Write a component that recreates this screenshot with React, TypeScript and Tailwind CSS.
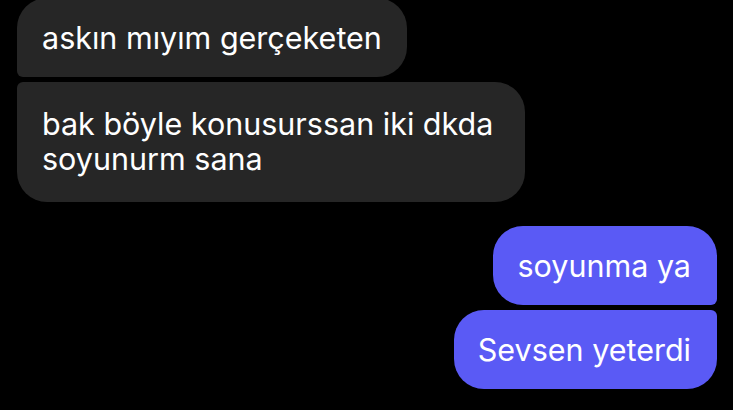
export default function App() {
    return (
        <div className="h-[410px] w-[733px] overflow-hidden bg-black text-white" style={{ fontFamily: 'Inter, "Noto Sans", sans-serif' }}>
            <div className="flex flex-col px-[17px] -mt-[2px]">
                <div className="self-start rounded-[30px] rounded-bl-[6px] bg-[#262626] px-[25px] py-[22px] text-[30.5px] leading-[35px]">
                    askın mıyım gerçeketen
                </div>
                <div className="mt-[5px] w-[508px] self-start rounded-[30px] rounded-tl-[6px] bg-[#262626] px-[25px] pt-[24px] pb-[26px] text-[30.5px] leading-[35px]">
                    bak böyle konusurssan iki dkda soyunurm sana
                </div>
                <div className="mt-[24px] mr-[-1px] self-end rounded-[30px] rounded-br-[6px] bg-[#5a5af5] pl-[24px] pr-[26px] py-[22px] text-[30.5px] leading-[35px]">
                    soyunma ya
                </div>
                <div className="mt-[5px] mr-[-1px] self-end rounded-[30px] rounded-tr-[6px] bg-[#5a5af5] pl-[24px] pr-[26px] py-[22px] text-[30.5px] leading-[35px]">
                    Sevsen yeterdi
                </div>
            </div>
        </div>
    );
}
